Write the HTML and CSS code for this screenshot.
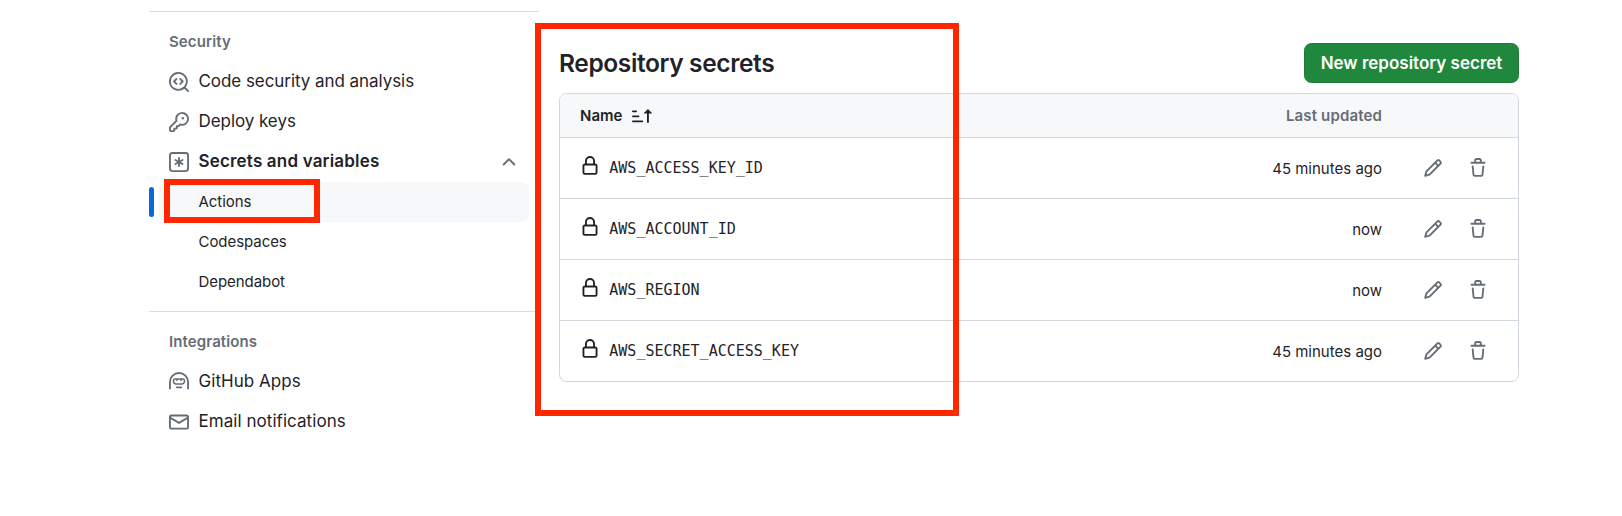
FILE: index.html
```html
<!DOCTYPE html>
<html lang="en">
<head>
<meta charset="utf-8">
<title>Repository secrets</title>
<link rel="stylesheet" href="styles.css">
</head>
<body>
<svg class="sprite" aria-hidden="true">
  <symbol id="codescan" viewBox="0 0 16 16"><path d="M8.47 4.97a.75.75 0 0 0 0 1.06L9.94 7.5 8.47 8.97a.75.75 0 1 0 1.06 1.06l2-2a.75.75 0 0 0 0-1.06l-2-2a.75.75 0 0 0-1.06 0ZM6.53 6.03a.75.75 0 0 0-1.06-1.06l-2 2a.75.75 0 0 0 0 1.06l2 2a.75.75 0 1 0 1.06-1.06L5.06 7.5l1.47-1.47Z"/><path d="M12.246 13.307a7.501 7.501 0 1 1 1.06-1.06l2.474 2.473a.749.749 0 0 1-.326 1.275.749.749 0 0 1-.734-.215ZM1.5 7.5a6.002 6.002 0 0 0 3.608 5.504 6.002 6.002 0 0 0 6.486-1.117.748.748 0 0 1 .292-.293A6 6 0 1 0 1.5 7.5Z"/></symbol>
  <symbol id="key" viewBox="0 0 16 16"><path d="M10.5 0a5.499 5.499 0 1 1-1.288 10.848l-.932.932a.749.749 0 0 1-.53.22H7v.75a.749.749 0 0 1-.22.53l-.5.5a.749.749 0 0 1-.53.22H5v.75a.749.749 0 0 1-.22.53l-.5.5a.749.749 0 0 1-.53.22h-2A1.75 1.75 0 0 1 0 14.25v-2c0-.199.079-.389.22-.53l4.932-4.932A5.5 5.5 0 0 1 10.5 0Zm-4 5.5c-.001.431.069.86.205 1.269a.75.75 0 0 1-.181.768L1.5 12.56v1.69c0 .138.112.25.25.25h1.69l.06-.06v-1.19a.75.75 0 0 1 .75-.75h1.19l.06-.06v-1.19a.75.75 0 0 1 .75-.75h1.19l1.023-1.025a.75.75 0 0 1 .768-.18A4 4 0 1 0 6.5 5.5ZM11 6a1 1 0 1 1 0-2 1 1 0 0 1 0 2Z"/></symbol>
  <symbol id="asterisk" viewBox="0 0 16 16"><path d="M0 2.75A2.75 2.75 0 0 1 2.75 0h10.5A2.75 2.75 0 0 1 16 2.75v10.5A2.75 2.75 0 0 1 13.25 16H2.75A2.75 2.75 0 0 1 0 13.25ZM2.75 1.5c-.69 0-1.25.56-1.25 1.25v10.5c0 .69.56 1.25 1.25 1.25h10.5c.69 0 1.25-.56 1.25-1.25V2.75c0-.69-.56-1.25-1.25-1.25Z"/><path d="M8 4a.75.75 0 0 1 .75.75V6.7l1.69-.975a.75.75 0 0 1 .75 1.3L9.5 8l1.69.976a.75.75 0 0 1-.75 1.298L8.75 9.3v1.951a.75.75 0 0 1-1.5 0V9.299l-1.69.976a.75.75 0 0 1-.75-1.3L6.5 8l-1.69-.975a.75.75 0 0 1 .75-1.3l1.69.976V4.75A.75.75 0 0 1 8 4Z"/></symbol>
  <symbol id="chevron" viewBox="0 0 16 16"><path d="M3.22 10.53a.749.749 0 0 1 0-1.06l4.25-4.25a.749.749 0 0 1 1.06 0l4.25 4.25a.749.749 0 1 1-1.06 1.06L8 6.811 4.28 10.53a.749.749 0 0 1-1.06 0Z"/></symbol>
  <symbol id="hubot" viewBox="0 0 16 16"><path d="M0 8a8 8 0 1 1 16 0v5.25a.75.75 0 0 1-1.5 0V8a6.5 6.5 0 1 0-13 0v5.25a.75.75 0 0 1-1.5 0V8Zm5.5 4.25a.75.75 0 0 1 .75-.75h3.5a.75.75 0 0 1 0 1.5h-3.5a.75.75 0 0 1-.75-.75Z"/><path class="goggles" d="M5 5.6h6a1.4 1.4 0 0 1 1.4 1.4v.4A2.1 2.1 0 0 1 10.3 9.5H5.7A2.1 2.1 0 0 1 3.6 7.4V7A1.4 1.4 0 0 1 5 5.6Z"/><path d="M5 5.8h2.6L6.3 7.5ZM8.4 5.8H11L9.7 7.5Z"/></symbol>
  <symbol id="mail" viewBox="0 0 16 16"><path d="M1.75 2h12.5c.966 0 1.75.784 1.75 1.75v8.5A1.75 1.75 0 0 1 14.25 14H1.75A1.75 1.75 0 0 1 0 12.25v-8.5C0 2.784.784 2 1.75 2ZM1.5 12.251c0 .138.112.25.25.25h12.5a.25.25 0 0 0 .25-.25V5.809L8.38 9.397a.75.75 0 0 1-.76 0L1.5 5.809v6.442Zm13-8.181v-.32a.25.25 0 0 0-.25-.25H1.75a.25.25 0 0 0-.25.25v.32L8 7.88Z"/></symbol>
  <symbol id="lock" viewBox="0 0 16 16"><path d="M4 4a4 4 0 0 1 8 0v2h.25c.966 0 1.75.784 1.75 1.75v5.5A1.75 1.75 0 0 1 12.25 15h-8.5A1.75 1.75 0 0 1 2 13.25v-5.5C2 6.784 2.784 6 3.75 6H4Zm8.25 3.5h-8.5a.25.25 0 0 0-.25.25v5.5c0 .138.112.25.25.25h8.5a.25.25 0 0 0 .25-.25v-5.5a.25.25 0 0 0-.25-.25ZM10.5 6V4a2.5 2.5 0 1 0-5 0v2Z"/></symbol>
  <symbol id="pencil" viewBox="0 0 16 16"><path d="M11.013 1.427a1.75 1.75 0 0 1 2.474 0l1.086 1.086a1.75 1.75 0 0 1 0 2.474l-8.61 8.61c-.21.21-.47.364-.756.445l-3.251.93a.75.75 0 0 1-.927-.928l.929-3.25c.081-.286.235-.547.445-.758l8.61-8.61Zm.176 4.823L9.75 4.81l-6.286 6.287a.253.253 0 0 0-.064.108l-.558 1.953 1.953-.558a.253.253 0 0 0 .108-.064Zm1.238-3.763a.25.25 0 0 0-.354 0L10.811 3.75l1.439 1.44 1.263-1.263a.25.25 0 0 0 0-.354Z"/></symbol>
  <symbol id="trash" viewBox="0 0 16 16"><path d="M11 1.75V3h2.25a.75.75 0 0 1 0 1.5H2.75a.75.75 0 0 1 0-1.5H5V1.75C5 .784 5.784 0 6.75 0h2.5C10.216 0 11 .784 11 1.75ZM4.496 6.675l.66 6.6a.25.25 0 0 0 .249.225h5.19a.25.25 0 0 0 .249-.225l.66-6.6a.75.75 0 0 1 1.492.149l-.66 6.6A1.748 1.748 0 0 1 10.595 15h-5.19a1.75 1.75 0 0 1-1.741-1.575l-.66-6.6a.75.75 0 1 1 1.492-.15ZM6.5 1.75V3h3V1.75a.25.25 0 0 0-.25-.25h-2.5a.25.25 0 0 0-.25.25Z"/></symbol>
  <symbol id="sort" viewBox="0 0 16 16"><path d="m12.927 2.573 3 3A.25.25 0 0 1 15.75 6H13.5v6.75a.75.75 0 0 1-1.5 0V6H9.75a.25.25 0 0 1-.177-.427l3-3a.25.25 0 0 1 .354 0ZM0 12.25a.75.75 0 0 1 .75-.75h7.5a.75.75 0 0 1 0 1.5H.75a.75.75 0 0 1-.75-.75Zm0-4a.75.75 0 0 1 .75-.75h4.5a.75.75 0 0 1 0 1.5H.75A.75.75 0 0 1 0 8.25Zm0-4a.75.75 0 0 1 .75-.75h2.5a.75.75 0 0 1 0 1.5H.75A.75.75 0 0 1 0 4.25Z"/></symbol>
</svg>
<div class="page">
  <nav class="sidebar">
    <section class="group">
      <h3 class="group-title">Security</h3>
      <a class="item"><svg class="icon"><use href="#codescan"/></svg><span class="label">Code security and analysis</span></a>
      <a class="item"><svg class="icon"><use href="#key"/></svg><span class="label">Deploy keys</span></a>
      <a class="item open"><svg class="icon"><use href="#asterisk"/></svg><span class="label">Secrets and variables</span><svg class="icon chevron"><use href="#chevron"/></svg></a>
      <a class="item sub active"><span class="label">Actions</span><span class="mark mark-item"></span></a>
      <a class="item sub"><span class="label">Codespaces</span></a>
      <a class="item sub"><span class="label">Dependabot</span></a>
    </section>
    <section class="group">
      <h3 class="group-title">Integrations</h3>
      <a class="item apps"><svg class="icon"><use href="#hubot"/></svg><span class="label">GitHub Apps</span></a>
      <a class="item apps"><svg class="icon"><use href="#mail"/></svg><span class="label">Email notifications</span></a>
    </section>
  </nav>
  <main class="content">
    <header class="head">
      <h2 class="title">Repository secrets</h2>
      <button class="button">New repository secret</button>
    </header>
    <div class="table">
      <div class="row row-head"><span class="name">Name</span><svg class="icon sort"><use href="#sort"/></svg><span class="updated">Last updated</span></div>
      <div class="row"><svg class="icon lock"><use href="#lock"/></svg><code class="secret">AWS_ACCESS_KEY_ID</code><span class="updated">45 minutes ago</span><svg class="icon act"><use href="#pencil"/></svg><svg class="icon act"><use href="#trash"/></svg></div>
      <div class="row"><svg class="icon lock"><use href="#lock"/></svg><code class="secret">AWS_ACCOUNT_ID</code><span class="updated">now</span><svg class="icon act"><use href="#pencil"/></svg><svg class="icon act"><use href="#trash"/></svg></div>
      <div class="row"><svg class="icon lock"><use href="#lock"/></svg><code class="secret">AWS_REGION</code><span class="updated">now</span><svg class="icon act"><use href="#pencil"/></svg><svg class="icon act"><use href="#trash"/></svg></div>
      <div class="row"><svg class="icon lock"><use href="#lock"/></svg><code class="secret">AWS_SECRET_ACCESS_KEY</code><span class="updated">45 minutes ago</span><svg class="icon act"><use href="#pencil"/></svg><svg class="icon act"><use href="#trash"/></svg></div>
    </div>
    <span class="mark mark-secrets"></span>
  </main>
</div>
</body>
</html>
```

FILE: styles.css
```css
* { box-sizing: border-box; }
body {
  margin: 0;
  background: #fff;
  color: #1f2328;
  font-family: Inter, "Liberation Sans", sans-serif;
}
.sprite { display: none; }
.page {
  display: flex;
  gap: 20px;
  width: 1519px;
  height: 516px;
  padding: 11px 0 0 149px;
  overflow: hidden;
}
.sidebar { flex: 0 0 390px; }
.group {
  height: 300px;
  padding: 10px 10px 0;
  border-top: 1px solid #d8dee4;
}
.group-title {
  height: 40px;
  margin: 0;
  padding-left: 10px;
  color: #656d76;
  font-size: 15px;
  font-weight: 600;
  letter-spacing: 0.1px;
  line-height: 40px;
}
.item {
  position: relative;
  display: flex;
  align-items: center;
  gap: 10px;
  height: 40px;
  padding: 0 10px;
  border-radius: 7.5px;
  font-size: 17px;
  letter-spacing: -0.06px;
  line-height: 25px;
  white-space: nowrap;
}
.label {
  margin-left: -0.5px;
  padding-bottom: 2px;
}
.apps { letter-spacing: 0.05px; }
.icon {
  flex: none;
  width: 20px;
  height: 20px;
  fill: #656d76;
}
.goggles {
  fill: none;
  stroke: #656d76;
  stroke-width: 1.2;
}
.open {
  font-weight: 600;
  letter-spacing: 0.18px;
}
.chevron { margin-left: auto; }
.sub {
  padding-left: 40px;
  font-size: 15px;
}
.active { background: #f6f8fa; }
.active::before {
  content: "";
  position: absolute;
  left: -10px;
  top: 5px;
  width: 5px;
  height: 30px;
  border-radius: 3px;
  background: #0969da;
}
.mark {
  position: absolute;
  border: 6px solid #ff2600;
  pointer-events: none;
}
.mark-item { left: 5px; top: -3px; width: 156px; height: 44px; }
.content {
  position: relative;
  flex: 1;
  padding-top: 32px;
}
.mark-secrets { left: -24px; top: 12px; width: 424px; height: 393px; }
.head {
  display: flex;
  align-items: center;
  justify-content: space-between;
  height: 40px;
  margin-bottom: 10px;
}
.title {
  margin: 0;
  font-size: 24.5px;
  font-weight: 600;
  letter-spacing: -0.38px;
}
.button {
  width: 215px;
  height: 40px;
  padding: 1px 0 0;
  border: 1px solid #1f7a37;
  border-radius: 7.5px;
  background: #1f883d;
  color: #fff;
  font: 600 17px/37px Inter, sans-serif;
  white-space: nowrap;
}
.table {
  border: 1px solid #d0d7de;
  border-radius: 7.5px;
  overflow: hidden;
}
.row {
  display: flex;
  align-items: center;
  height: 61px;
  padding: 0 30px 0 20px;
  border-top: 1px solid #d0d7de;
}
.row-head {
  height: 43px;
  padding-right: 136px;
  border-top: 0;
  background: #f6f8fa;
  font-size: 15px;
  font-weight: 600;
}
.sort { margin-left: 10px; fill: #1f2328; }
.lock { margin-bottom: 5px; fill: #1f2328; }
.secret {
  margin-left: 9.3px;
  font: 15px/20px "DejaVu Sans Mono", monospace;
}
.updated {
  margin-left: auto;
  font-size: 15px;
}
.row-head .updated {
  color: #656d76;
  letter-spacing: 0.15px;
}
.act { margin-left: 41px; }
.act + .act { margin-left: 25px; }
```
